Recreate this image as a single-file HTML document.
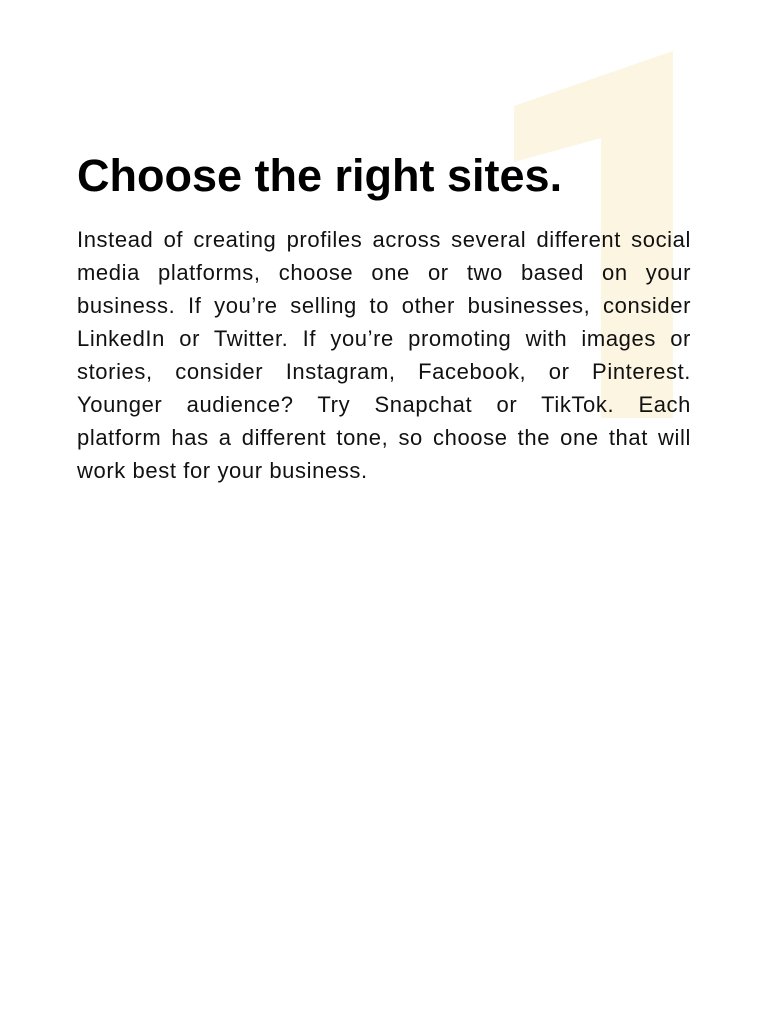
<!DOCTYPE html>
<html><head><style>
html,body{margin:0;padding:0;background:#fff;}
body{width:768px;height:1024px;position:relative;overflow:hidden;font-family:"Liberation Sans",sans-serif;}
svg{position:absolute;left:0;top:0;}
h1{position:absolute;left:77px;top:148px;margin:0;font-size:45px;font-weight:bold;color:#000;letter-spacing:0px;line-height:56px;}
.p{position:absolute;left:77px;top:223px;width:614px;margin:0;font-size:22px;line-height:33px;color:#111;letter-spacing:0.6px;}
.p div{text-align:justify;text-align-last:justify;white-space:nowrap;}
.p div.l{text-align-last:left;}
</style></head><body>
<svg width="768" height="1024"><polygon points="673,51 514,106 514,162 601,138 601,418 673,418" fill="#fbf5e2"/></svg>
<h1>Choose the right sites.</h1>
<div class="p">
<div>Instead of creating profiles across several different social</div>
<div>media platforms, choose one or two based on your</div>
<div>business. If you’re selling to other businesses, consider</div>
<div>LinkedIn or Twitter. If you’re promoting with images or</div>
<div>stories, consider Instagram, Facebook, or Pinterest.</div>
<div>Younger audience? Try Snapchat or TikTok. Each</div>
<div>platform has a different tone, so choose the one that will</div>
<div class="l">work best for your business.</div>
</div>
</body></html>
